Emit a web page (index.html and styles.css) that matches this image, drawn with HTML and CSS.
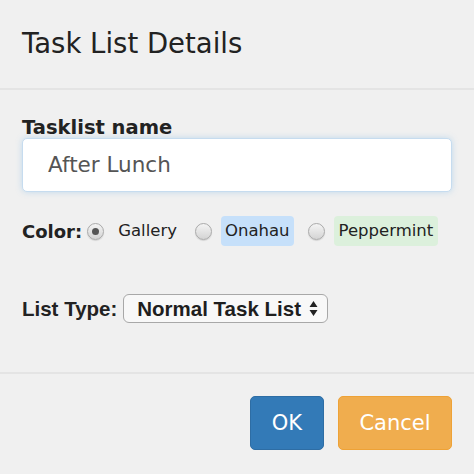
FILE: index.html
```html
<!DOCTYPE html>
<html>
<head>
<meta charset="utf-8">
<link rel="stylesheet" href="styles.css">
</head>
<body>
<div class="modal">
  <div class="modal-header">
    <h4 class="title">Task List Details</h4>
  </div>
  <div class="modal-body">
    <label class="field-label">Tasklist name</label>
    <div class="input">After Lunch</div>
    <div class="color-row">
      <span class="row-label">Color:</span>
      <span class="radio checked"></span>
      <span class="swatch">Gallery</span>
      <span class="radio"></span>
      <span class="swatch blue">Onahau</span>
      <span class="radio"></span>
      <span class="swatch green">Peppermint</span>
    </div>
    <div class="type-row">
      <span class="type-label">List Type:</span>
      <span class="select">Normal Task List
        <svg class="arrows" width="9" height="17" viewBox="0 0 9 17"><path d="M4.5 1 L8.5 7 L0.5 7 Z M4.5 16 L8.5 10 L0.5 10 Z" fill="#222"/></svg>
      </span>
    </div>
  </div>
  <div class="modal-footer">
    <span class="btn btn-ok">OK</span>
    <span class="btn btn-cancel">Cancel</span>
  </div>
</div>
</body>
</html>
```
FILE: styles.css
```css
html, body {
  margin: 0;
  padding: 0;
  background: #f0f0f0;
}
body {
  font-family: "DejaVu Sans", "Noto Sans", sans-serif;
  color: #222;
  width: 474px;
  height: 474px;
  overflow: hidden;
}
.modal-header {
  height: 90px;
  box-sizing: border-box;
  padding: 27px 22px 0;
  border-bottom: 2px solid #e4e4e4;
}
.title {
  margin: 0;
  font-size: 27.5px;
  font-weight: 400;
  line-height: 32px;
  color: #222;
}
.modal-body {
  padding: 28px 22px 0;
  height: 282px;
  box-sizing: border-box;
}
.field-label {
  display: block;
  font-size: 19.5px;
  font-weight: 700;
  line-height: 20px;
  color: #222;
}
.input {
  height: 54px;
  box-sizing: border-box;
  background: #fff;
  border-radius: 5px;
  border: 1px solid #c6dcef;
  box-shadow: 0 0 6px rgba(102, 175, 233, 0.35);
  padding: 0 25px;
  font-size: 21.5px;
  line-height: 52px;
  color: #555;
}
.color-row {
  display: flex;
  align-items: center;
  margin-top: 24px;
  height: 30px;
}
.row-label {
  font-size: 18px;
  font-weight: 700;
  margin-right: 5px;
}
.radio {
  flex: none;
  width: 17px;
  height: 17px;
  border-radius: 50%;
  border: 1px solid #aaa;
  background: linear-gradient(#f4f4f4, #d4d4d4);
  box-shadow: 0 1px 1px rgba(0, 0, 0, 0.12);
  box-sizing: border-box;
  display: flex;
  align-items: center;
  justify-content: center;
}
.radio.checked::after {
  content: "";
  width: 7px;
  height: 7px;
  border-radius: 50%;
  background: #555;
}
.swatch {
  font-size: 16.5px;
  height: 30px;
  box-sizing: border-box;
  padding: 0 4px;
  border-radius: 4px;
  margin-left: 10px;
  margin-right: 14px;
  line-height: 30px;
  color: #222;
}
.swatch.blue { background: #c6e0fa; margin-left: 9px; margin-right: 14px; }
.swatch.green { background: #dcf0dc; margin-left: 9px; margin-right: 0; padding: 0 5px; }
.type-row {
  display: flex;
  align-items: center;
  margin-top: 48px;
  height: 29px;
}
.type-label {
  font-family: "Liberation Sans", Arial, sans-serif;
  font-size: 20.5px;
  font-weight: 700;
  margin-right: 6px;
}
.select {
  font-family: "Liberation Sans", Arial, sans-serif;
  font-size: 20.5px;
  font-weight: 700;
  display: inline-flex;
  align-items: center;
  gap: 8px;
  height: 29px;
  box-sizing: border-box;
  padding: 0 9px 0 13px;
  border: 1.5px solid #a8a8a8;
  border-radius: 6px;
  background: #f8f8f8;
  color: #1e1e1e;
}
.arrows { flex: none; }
.modal-footer {
  border-top: 2px solid #e4e4e4;
  display: flex;
  justify-content: flex-end;
  gap: 14px;
  padding: 22px 22px 0;
}
.btn {
  height: 54px;
  box-sizing: border-box;
  border-radius: 5px;
  font-size: 21px;
  line-height: 52px;
  color: #fff;
  text-align: center;
}
.btn-ok {
  width: 74px;
  background: #337ab7;
  border: 1px solid #2e6da4;
}
.btn-cancel {
  width: 114px;
  background: #f0ad4e;
  border: 1px solid #eea236;
}
```
